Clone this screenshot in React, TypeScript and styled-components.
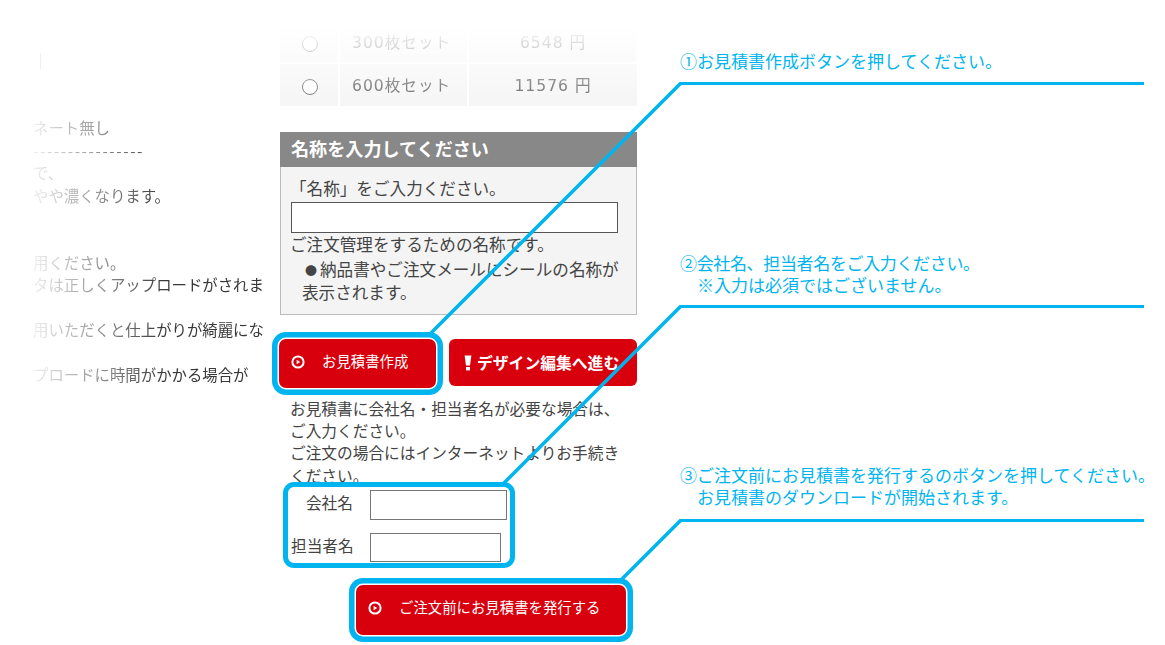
import styled, { createGlobalStyle } from "styled-components";

const BLUE = "#00b5ef";
const RED = "#d9000d";

const leftLines = [
  "｜",
  "",
  "",
  "ネート無し",
  "----------------",
  "で、",
  "やや濃くなります。",
  "",
  "",
  "用ください。",
  "タは正しくアップロードがされま",
  "",
  "用いただくと仕上がりが綺麗にな",
  "",
  "プロードに時間がかかる場合が",
];

const CircleIcon = () => (
  <svg width="14" height="14" viewBox="0 0 14 14" aria-hidden="true">
    <circle cx="7" cy="7" r="5.6" fill="none" stroke="#fff" strokeWidth="2" />
    <path d="M5.6 4.8 9.2 7 5.6 9.2z" fill="#fff" />
  </svg>
);

const AlertIcon = () => (
  <svg width="8" height="16" viewBox="0 0 8 16" aria-hidden="true">
    <path d="M.6 .6h6.8L6 10.6H2z" fill="#fff" />
    <rect x="2" y="12" width="4" height="3.4" fill="#fff" />
  </svg>
);

const App = () => {
  return (
    <>
      <GlobalStyle />
      <Page>
        <LeftColumn>
          {leftLines.map((line, index) => (
            <LeftLine key={index} $dashed={line.startsWith("-")}>
              {line}
            </LeftLine>
          ))}
        </LeftColumn>

        <CenterColumn>
          <PriceTable>
            <tbody>
              <tr className="first">
                <td><Radio type="radio" name="set" readOnly /></td>
                <td>300枚セット</td>
                <td className="price">6548 円</td>
              </tr>
              <tr>
                <td><Radio type="radio" name="set" readOnly /></td>
                <td>600枚セット</td>
                <td className="price">11576 円</td>
              </tr>
            </tbody>
          </PriceTable>

          <NamePanel>
            <PanelHeader>名称を入力してください</PanelHeader>
            <PanelBody>
              <p>「名称」をご入力ください。</p>
              <NameInput type="text" />
              <p>ご注文管理をするための名称です。</p>
              <PanelNote>
                <Bullet>●</Bullet>納品書やご注文メールにシールの名称が
                <br />
                表示されます。
              </PanelNote>
            </PanelBody>
          </NamePanel>

          <ButtonRow>
            <RedButton $ring $width={157} $height={49}>
              <CircleIcon />
              <ButtonLabel>お見積書作成</ButtonLabel>
            </RedButton>
            <DesignButton>
              <AlertIcon />
              <span>デザイン編集へ進む</span>
            </DesignButton>
          </ButtonRow>

          <Notice>
            お見積書に会社名・担当者名が必要な場合は、
            <br />
            ご入力ください。
            <br />
            ご注文の場合にはインターネットよりお手続き
            <br />
            ください。
          </Notice>

          <CompanyGroup>
            <FieldLabel>会社名</FieldLabel>
            <FieldInput type="text" $width={137} $height={30} />
            <FieldLabel>担当者名</FieldLabel>
            <FieldInput type="text" $width={131} $height={29} />
          </CompanyGroup>

          <IssueRow>
            <RedButton $ring $width={270} $height={50}>
              <CircleIcon />
              <ButtonLabel>ご注文前にお見積書を発行する</ButtonLabel>
            </RedButton>
          </IssueRow>
        </CenterColumn>

        <RightColumn>
          <Annotation $top={50} $bottom={10}>
            <AnnotationLine>①お見積書作成ボタンを押してください。</AnnotationLine>
          </Annotation>
          <Annotation $top={167} $bottom={9}>
            <AnnotationLine $tight>②会社名、担当者名をご入力ください。</AnnotationLine>
            <AnnotationLine $indent>※入力は必須ではございません。</AnnotationLine>
          </Annotation>
          <Annotation $top={156} $bottom={11}>
            <AnnotationLine>③ご注文前にお見積書を発行するのボタンを押してください。</AnnotationLine>
            <AnnotationLine $indent>お見積書のダウンロードが開始されます。</AnnotationLine>
          </Annotation>
        </RightColumn>

        <LeaderLines width="1165" height="645" viewBox="0 0 1165 645" aria-hidden="true">
          <line x1="681" y1="83" x2="431" y2="333" />
          <line x1="681" y1="306" x2="503" y2="484" />
          <line x1="681" y1="520" x2="621" y2="580" />
        </LeaderLines>
      </Page>
    </>
  );
};

const GlobalStyle = createGlobalStyle`
  html, body {
    margin: 0;
    background: #fff;
  }

  body {
    font-family: "Noto Sans CJK JP", "Noto Sans", sans-serif;
    color: #444;
  }
`;

const Page = styled.div`
  position: relative;
  display: flex;
  width: 1165px;
  height: 645px;
  overflow: hidden;
  background: #fff;
`;

const LeftColumn = styled.div`
  box-sizing: border-box;
  flex: none;
  width: 270px;
  margin-right: 10px;
  padding: 49px 0 0 33px;
  overflow: hidden;
  color: #383838;
  font-size: 15.4px;
  -webkit-mask-image: linear-gradient(to right, transparent 22px, #000 165px);
  mask-image: linear-gradient(to right, transparent 22px, #000 165px);
`;

const LeftLine = styled.div<{ $dashed: boolean }>`
  height: 22.45px;
  line-height: 22.45px;
  letter-spacing: ${(p) => (p.$dashed ? "1.6px" : "0")};
  white-space: nowrap;
`;

const CenterColumn = styled.div`
  flex: none;
  width: 357px;
  margin-right: 43px;
  padding-top: 20px;
  font-size: 15.7px;
`;

const PriceTable = styled.table`
  width: 361px;
  height: 88px;
  border-collapse: separate;
  border-spacing: 2px;
  margin: 0 0 0 -2px;
  color: #6f6f6f;
  font-family: "DejaVu Sans", "Noto Sans CJK JP", sans-serif;
  font-size: 15.6px;
  letter-spacing: 1px;
  table-layout: fixed;
  -webkit-mask-image: linear-gradient(to bottom, transparent 6px, #000 78px);
  mask-image: linear-gradient(to bottom, transparent 6px, #000 78px);

  tr.first {
    height: 40px;
  }

  td {
    padding: 0 0 3px 12px;
    background: #f6f6f6;
  }

  td:first-child {
    width: 58px;
    padding: 0;
  }

  td:nth-child(2) {
    width: 115px;
  }

  td.price {
    padding: 0 0 3px;
    text-align: center;
  }
`;

const Radio = styled.input`
  appearance: none;
  display: block;
  box-sizing: border-box;
  width: 16px;
  height: 16px;
  margin: 3px 0 0 22px;
  border: 1.4px solid #777;
  border-radius: 50%;
  background: #fff;
`;

const NamePanel = styled.section`
  margin-top: 24px;
`;

const PanelHeader = styled.h2`
  box-sizing: border-box;
  height: 35px;
  margin: 0;
  padding-left: 11px;
  background: #888;
  color: #fff;
  font-size: 18.1px;
  font-weight: 700;
  line-height: 32px;
  white-space: nowrap;
`;

const PanelBody = styled.div`
  box-sizing: border-box;
  height: 148px;
  padding: 10px 9px 0;
  border: 1px solid #bbb;
  border-top: none;
  background: #f4f4f4;
  font-size: 16.6px;
  line-height: 23.5px;

  p {
    margin: 0;
    white-space: nowrap;
  }
`;

const NameInput = styled.input`
  display: block;
  box-sizing: border-box;
  width: 327px;
  height: 31px;
  margin: 1.5px 0 0 1px;
  border: 1px solid #555;
  border-radius: 0;
  background: #fff;
`;

const PanelNote = styled.div`
  margin-top: 1px;
  padding-left: 12px;
  white-space: nowrap;
`;

const Bullet = styled.span`
  display: inline-block;
  width: 18px;
  font-size: 12px;
  line-height: 1;
  text-align: center;
`;

const ButtonRow = styled.div`
  display: flex;
  align-items: flex-start;
  gap: 13px;
  margin: 24px 0 0 -1px;
`;

const RedButton = styled.button<{ $ring?: boolean; $width: number; $height: number }>`
  display: flex;
  align-items: center;
  gap: 17px;
  box-sizing: border-box;
  flex: none;
  width: ${(p) => p.$width}px;
  height: ${(p) => p.$height}px;
  padding: 0 0 3px 12px;
  border: none;
  border-radius: 7px;
  background: ${RED};
  color: #fff;
  font-family: inherit;
  font-size: 14.4px;
  box-shadow: ${(p) => (p.$ring ? `0 0 0 1.5px #fff, 0 0 0 7px ${BLUE}` : "none")};
`;

const ButtonLabel = styled.span`
  margin-bottom: 3px;
  white-space: nowrap;
`;

const DesignButton = styled.button`
  display: flex;
  align-items: center;
  gap: 5px;
  box-sizing: border-box;
  flex: none;
  width: 188px;
  height: 47px;
  padding: 0 0 0 15px;
  border: none;
  border-radius: 6px;
  background: ${RED};
  color: #fff;
  font-family: inherit;
  font-size: 15.8px;
  font-weight: 700;
  white-space: nowrap;
`;

const Notice = styled.p`
  margin: 9.5px 0 0;
  padding-left: 10px;
  line-height: 22.4px;
  white-space: nowrap;
`;

const CompanyGroup = styled.div`
  position: relative;
  display: grid;
  grid-template-columns: 62px auto;
  align-items: center;
  justify-content: start;
  column-gap: 17px;
  row-gap: 11px;
  box-sizing: border-box;
  width: 232px;
  height: 86px;
  margin: -5.5px 0 0 3px;
  padding: 2px 0 0 3px;
  border: 5px solid ${BLUE};
  border-radius: 11px;
  background: #fff;
`;

const FieldLabel = styled.label`
  padding-bottom: 4px;
  text-align: right;
  white-space: nowrap;
`;

const FieldInput = styled.input<{ $width: number; $height: number }>`
  box-sizing: border-box;
  width: ${(p) => p.$width}px;
  height: ${(p) => p.$height}px;
  margin: 0;
  border: 1.4px solid #777;
  border-radius: 0;
  background: #fff;
`;

const IssueRow = styled.div`
  margin: 17px 0 0 76px;
`;

const RightColumn = styled.div`
  flex: none;
  width: 464px;
  color: ${BLUE};
  font-size: 17px;
`;

const Annotation = styled.div<{ $top: number; $bottom: number }>`
  margin-top: ${(p) => p.$top}px;
  padding-bottom: ${(p) => p.$bottom}px;
  border-bottom: 3px solid ${BLUE};
`;

const AnnotationLine = styled.div<{ $tight?: boolean; $indent?: boolean }>`
  height: 22px;
  padding-left: ${(p) => (p.$indent ? "17px" : "0")};
  letter-spacing: ${(p) => (p.$tight ? "-0.35px" : "0")};
  line-height: 22px;
  white-space: nowrap;
`;

const LeaderLines = styled.svg`
  position: absolute;
  top: 0;
  left: 0;
  pointer-events: none;

  line {
    stroke: ${BLUE};
    stroke-width: 3.6;
  }
`;

export default App;
